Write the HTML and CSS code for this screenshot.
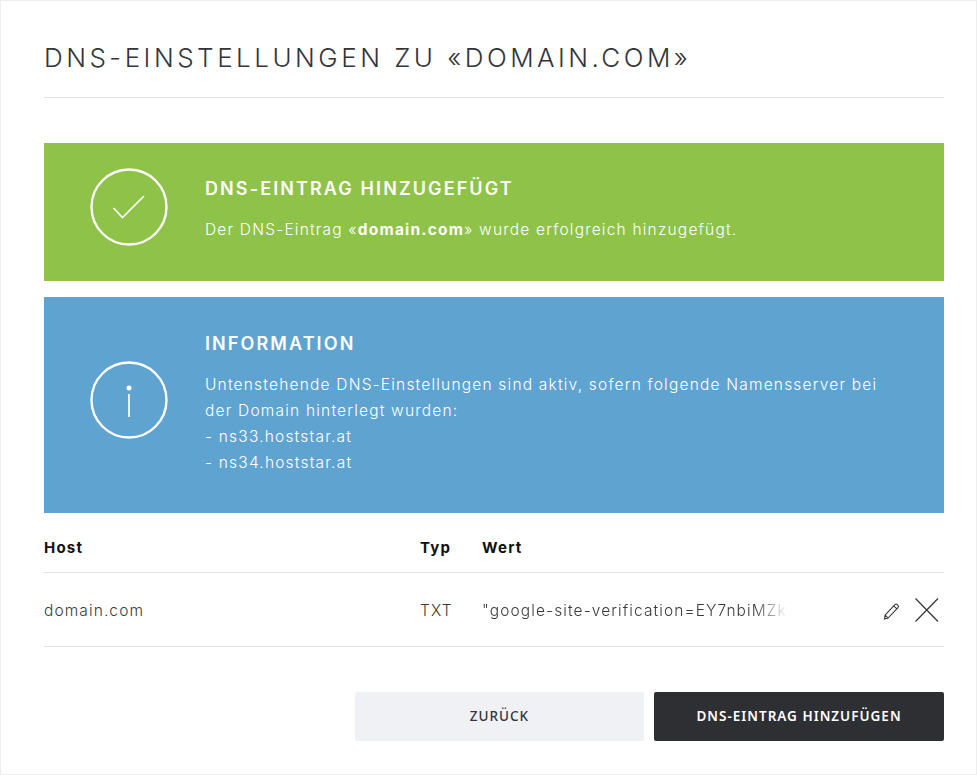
FILE: index.html
```html
<!DOCTYPE html>
<html lang="de">
<head>
<meta charset="utf-8">
<title>DNS-Einstellungen</title>
<link rel="stylesheet" href="styles.css">
</head>
<body>
<main class="panel">
  <h1 class="title">DNS-EINSTELLUNGEN ZU «DOMAIN.COM»</h1>
  <section class="notice notice-success">
    <div class="notice-icon">
      <svg width="78" height="78" viewBox="0 0 78 78" fill="none" stroke="#fff"><circle cx="39" cy="39" r="37.500" stroke-width="2.400"/><path d="M23.500 40l9 9.500L54 28" stroke-width="1.700"/></svg>
    </div>
    <div class="notice-body">
      <h2 class="notice-title">DNS-EINTRAG HINZUGEFÜGT</h2>
      <p class="notice-text">Der DNS-Eintrag «<b>domain.com</b>» wurde erfolgreich hinzugefügt.</p>
    </div>
  </section>
  <section class="notice notice-info">
    <div class="notice-icon">
      <svg width="78" height="78" viewBox="0 0 78 78" fill="none" stroke="#fff"><circle cx="39" cy="39" r="37.500" stroke-width="2.400"/><circle cx="39" cy="27" r="2.500" fill="#fff" stroke="none"/><path d="M39 33v23" stroke-width="1.700"/></svg>
    </div>
    <div class="notice-body">
      <h2 class="notice-title">INFORMATION</h2>
      <p class="notice-text">Untenstehende DNS-Einstellungen sind aktiv, sofern folgende Namensserver bei<br>der Domain hinterlegt wurden:<br>- ns33.hoststar.at<br>- ns34.hoststar.at</p>
    </div>
  </section>
  <div class="dns-row dns-head">
    <div class="col-host">Host</div>
    <div class="col-type">Typ</div>
    <div class="col-value">Wert</div>
  </div>
  <div class="dns-row dns-item">
    <div class="col-host">domain.com</div>
    <div class="col-type">TXT</div>
    <div class="col-value"><span class="truncate">"google-site-verification=EY7nbiMZk3</span></div>
    <div class="col-actions">
      <svg class="icon-edit" width="17" height="17" viewBox="0 0 18 19" fill="none" stroke="#333" stroke-width="1.150"><path d="M1.800 13.500L12.800 1.800c.8-.8 1.800-.8 2.600 0l.8.8c.8.8.8 1.700 0 2.500L5.200 16.800l-4 1.200zM1.800 13.500l3.400 3.300M11.500 3.200l3.500 3.300"/></svg>
      <svg width="24" height="24" viewBox="0 0 24 24" fill="none" stroke="#333" stroke-width="1.200"><path d="M.5 .5l22.500 23M23 .5L.5 23.500"/></svg>
    </div>
  </div>
  <div class="actions">
    <a class="btn btn-light" href="#">ZURÜCK</a>
    <a class="btn btn-dark" href="#">DNS-EINTRAG HINZUFÜGEN</a>
  </div>
</main>
</body>
</html>
```
FILE: styles.css
```css
* { box-sizing: border-box; }
html, body { margin: 0; padding: 0; background: #fff; }
body { width: 978px; height: 775px; overflow: hidden; font-family: "Inter", "Liberation Sans", sans-serif; color: #33353a; }
.panel { width: 977px; height: 775px; border: 1px solid #eeeeee; padding: 0 32px 0 43px; }
.title { margin: 0; height: 97px; padding-top: 40px; border-bottom: 1px solid #e3e3e3; font-size: 26px; line-height: 34px; font-weight: 300; letter-spacing: 3.500px; white-space: nowrap; color: #33353a; }
.notice { display: flex; color: #fff; }
.notice-success { height: 138px; margin-top: 45px; background: #8fc249; align-items: flex-start; padding-top: 25px; }
.notice-info { height: 216px; margin-top: 16px; background: #5fa3d1; align-items: center; }
.notice-icon { width: 161px; padding-left: 46px; flex: none; line-height: 0; }
.notice-info .notice-icon { margin-bottom: 11px; }
.notice-title { margin: 0; padding-top: 1px; font-size: 18px; line-height: 24px; font-weight: 600; letter-spacing: 2.100px; }
.notice-text { margin: 16px 0 0; font-size: 15.500px; line-height: 26px; font-weight: 300; letter-spacing: 1.200px; white-space: nowrap; }
.notice-success .notice-body { padding-top: 8px; }
.notice-info .notice-body { padding-bottom: 3px; }
.notice-text b { font-weight: 700; }
.dns-row { display: flex; align-items: center; font-size: 15px; }
.dns-head { height: 60px; padding-top: 10px; border-bottom: 1px solid #e3e3e3; font-weight: 700; letter-spacing: 1.200px; color: #111; }
.dns-item { height: 74px; padding-top: 1px; border-bottom: 1px solid #e3e3e3; font-weight: 300; font-size: 15.500px; letter-spacing: 1.100px; color: #3a3a3a; }
.col-host { width: 376px; flex: none; }
.col-type { width: 62px; flex: none; }
.col-value { width: 330px; flex: none; white-space: nowrap; }
.truncate { display: block; width: 100%; -webkit-mask-image: linear-gradient(90deg, #000 272px, transparent 306px); mask-image: linear-gradient(90deg, #000 272px, transparent 306px); }
.col-actions { margin-left: auto; display: flex; align-items: center; gap: 15px; padding-right: 5px; }
.col-actions svg { display: block; }
.icon-edit { margin-top: 2px; }
.actions { display: flex; justify-content: flex-end; gap: 10px; margin-top: 45px; }
.btn { display: flex; align-items: center; justify-content: center; width: 290px; height: 49px; padding-bottom: 2px; font-family: "Noto Sans", "Liberation Sans", sans-serif; font-size: 13.500px; font-weight: 500; letter-spacing: 1px; text-decoration: none; border-radius: 2px; }
.btn-light { width: 289px; background: #f0f1f5; color: #33353a; }
.btn-dark { background: #2e2f33; color: #fff; font-weight: 600; }
```
